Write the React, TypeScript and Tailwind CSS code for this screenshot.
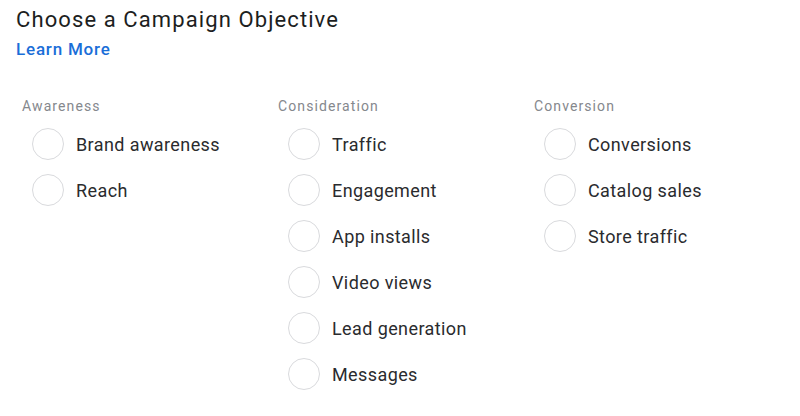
const groups = [
  { title: 'Awareness', items: ['Brand awareness', 'Reach'] },
  {
    title: 'Consideration',
    items: ['Traffic', 'Engagement', 'App installs', 'Video views', 'Lead generation', 'Messages'],
  },
  { title: 'Conversion', items: ['Conversions', 'Catalog sales', 'Store traffic'] },
];

export default function App() {
  return (
    <div className="h-[416px] w-[800px] bg-white pl-4 pt-[6px] font-['Roboto',sans-serif] text-[#1c1e21]">
      <h1 className="text-[22px] leading-[28px] tracking-[1.1px] text-[#1c1e21]">Choose a Campaign Objective</h1>
      <a href="#" className="mt-[5px] block text-[17px] leading-[20px] font-medium tracking-[0.8px] text-[#1a6ed8]">
        Learn More
      </a>
      <div className="ml-[6px] mt-[39px] grid grid-cols-[256px_256px_256px]">
        {groups.map((g) => (
          <div key={g.title}>
            <div className="text-[14px] leading-[16px] tracking-[1.1px] text-[#85888d]">{g.title}</div>
            <ul className="mt-[7px]">
              {g.items.map((item) => (
                <li key={item} className="flex h-[46px] items-center gap-3 pl-[10px]">
                  <span className="h-8 w-8 shrink-0 rounded-full border-[1.5px] border-[#d9dadd] bg-white" />
                  <span className="text-[18px] tracking-[0.4px] text-[#2a2b2e]">{item}</span>
                </li>
              ))}
            </ul>
          </div>
        ))}
      </div>
    </div>
  );
}
